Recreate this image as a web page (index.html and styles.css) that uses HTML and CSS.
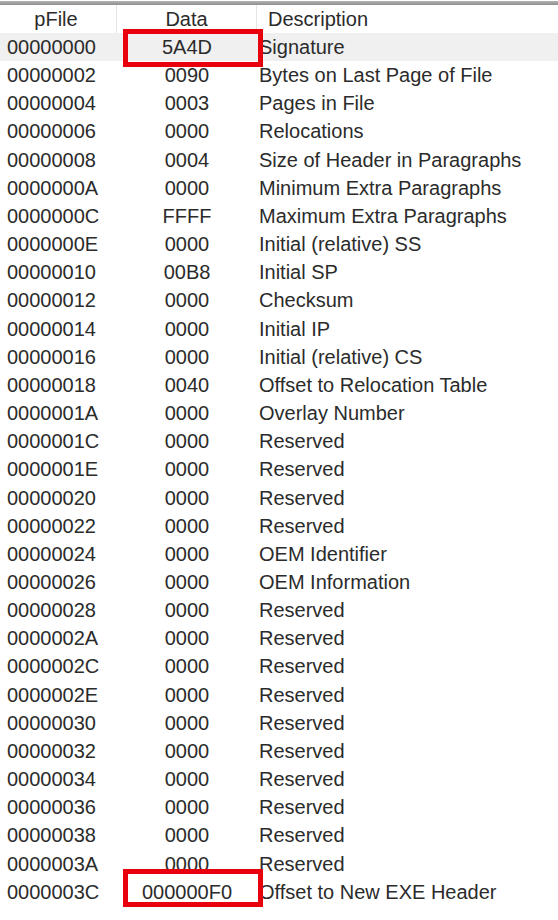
FILE: index.html
```html
<!DOCTYPE html>
<html>
<head>
<meta charset="utf-8">
<link rel="stylesheet" href="styles.css">
</head>
<body>
<div class="list">
  <div class="edge"></div>
  <div class="row head">
    <div class="c1 hc">pFile</div>
    <div class="c2 hc">Data</div>
    <div class="c3 hd">Description</div>
  </div>
  <div class="rows">
    <div class="row sel"><div class="c1">00000000</div><div class="c2">5A4D</div><div class="c3">Signature</div></div>
    <div class="row"><div class="c1">00000002</div><div class="c2">0090</div><div class="c3">Bytes on Last Page of File</div></div>
    <div class="row"><div class="c1">00000004</div><div class="c2">0003</div><div class="c3">Pages in File</div></div>
    <div class="row"><div class="c1">00000006</div><div class="c2">0000</div><div class="c3">Relocations</div></div>
    <div class="row"><div class="c1">00000008</div><div class="c2">0004</div><div class="c3">Size of Header in Paragraphs</div></div>
    <div class="row"><div class="c1">0000000A</div><div class="c2">0000</div><div class="c3">Minimum Extra Paragraphs</div></div>
    <div class="row"><div class="c1">0000000C</div><div class="c2">FFFF</div><div class="c3">Maximum Extra Paragraphs</div></div>
    <div class="row"><div class="c1">0000000E</div><div class="c2">0000</div><div class="c3">Initial (relative) SS</div></div>
    <div class="row"><div class="c1">00000010</div><div class="c2">00B8</div><div class="c3">Initial SP</div></div>
    <div class="row"><div class="c1">00000012</div><div class="c2">0000</div><div class="c3">Checksum</div></div>
    <div class="row"><div class="c1">00000014</div><div class="c2">0000</div><div class="c3">Initial IP</div></div>
    <div class="row"><div class="c1">00000016</div><div class="c2">0000</div><div class="c3">Initial (relative) CS</div></div>
    <div class="row"><div class="c1">00000018</div><div class="c2">0040</div><div class="c3">Offset to Relocation Table</div></div>
    <div class="row"><div class="c1">0000001A</div><div class="c2">0000</div><div class="c3">Overlay Number</div></div>
    <div class="row"><div class="c1">0000001C</div><div class="c2">0000</div><div class="c3">Reserved</div></div>
    <div class="row"><div class="c1">0000001E</div><div class="c2">0000</div><div class="c3">Reserved</div></div>
    <div class="row"><div class="c1">00000020</div><div class="c2">0000</div><div class="c3">Reserved</div></div>
    <div class="row"><div class="c1">00000022</div><div class="c2">0000</div><div class="c3">Reserved</div></div>
    <div class="row"><div class="c1">00000024</div><div class="c2">0000</div><div class="c3">OEM Identifier</div></div>
    <div class="row"><div class="c1">00000026</div><div class="c2">0000</div><div class="c3">OEM Information</div></div>
    <div class="row"><div class="c1">00000028</div><div class="c2">0000</div><div class="c3">Reserved</div></div>
    <div class="row"><div class="c1">0000002A</div><div class="c2">0000</div><div class="c3">Reserved</div></div>
    <div class="row"><div class="c1">0000002C</div><div class="c2">0000</div><div class="c3">Reserved</div></div>
    <div class="row"><div class="c1">0000002E</div><div class="c2">0000</div><div class="c3">Reserved</div></div>
    <div class="row"><div class="c1">00000030</div><div class="c2">0000</div><div class="c3">Reserved</div></div>
    <div class="row"><div class="c1">00000032</div><div class="c2">0000</div><div class="c3">Reserved</div></div>
    <div class="row"><div class="c1">00000034</div><div class="c2">0000</div><div class="c3">Reserved</div></div>
    <div class="row"><div class="c1">00000036</div><div class="c2">0000</div><div class="c3">Reserved</div></div>
    <div class="row"><div class="c1">00000038</div><div class="c2">0000</div><div class="c3">Reserved</div></div>
    <div class="row"><div class="c1">0000003A</div><div class="c2">0000</div><div class="c3">Reserved</div></div>
    <div class="row"><div class="c1">0000003C</div><div class="c2">000000F0</div><div class="c3">Offset to New EXE Header</div></div>
  </div>
  <div class="mark mark-top"></div>
  <div class="mark mark-bottom"></div>
</div>
</body>
</html>
```
FILE: styles.css
```css
html, body {
  margin: 0;
  padding: 0;
  background: #ffffff;
}
body {
  width: 558px;
  height: 920px;
  overflow: hidden;
  font-family: "Liberation Sans", Arial, sans-serif;
  font-size: 20px;
  color: #2b2b2b;
}
.list {
  position: relative;
  width: 558px;
  height: 920px;
  padding-top: 1px;
  box-sizing: border-box;
}
.edge {
  height: 4px;
  background: linear-gradient(#b4b4b4, #8e8e8e);
}
.row {
  display: grid;
  grid-template-columns: 117px 140px 1fr;
  height: 28.17px;
  line-height: 28.17px;
  white-space: nowrap;
}
.head {
  height: 28px;
  line-height: 28px;
}
.hc {
  text-align: center;
  border-right: 1px solid #e5e5e5;
}
.head .c1 {
  padding-left: 0;
  padding-right: 4px;
}
.c1 {
  padding-left: 7px;
}
.c2 {
  text-align: center;
}
.c3 {
  padding-left: 2px;
}
.head .c3 {
  padding-left: 11px;
}
.sel {
  background: #f0f0f0;
}
.mark {
  position: absolute;
  left: 123px;
  width: 140px;
  height: 38px;
  box-sizing: border-box;
  border: 5px solid #e8000c;
}
.mark-top {
  top: 29px;
}
.mark-bottom {
  top: 869px;
}
```
